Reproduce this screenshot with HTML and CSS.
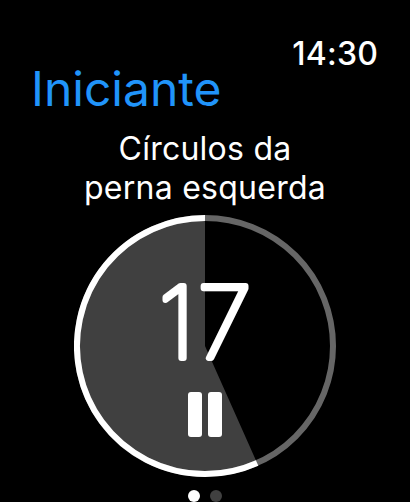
FILE: index.html
```
<!DOCTYPE html>
<html lang="pt">
<head>
<meta charset="utf-8">
<title>Iniciante</title>
<link rel="stylesheet" href="styles.css">
</head>
<body>
<main class="watch">
  <header class="header">
    <time class="clock">14:30</time>
    <h1 class="title">Iniciante</h1>
  </header>
  <p class="exercise">Círculos da<br>perna esquerda</p>
  <svg class="timer" viewBox="0 0 262 262">
    <path class="wedge" d="M131 131V3A128 128 0 1 0 183.1 247.9Z"/>
    <circle class="track" cx="131" cy="131" r="128"/>
    <path class="progress" d="M131 3A128 128 0 1 0 183.1 247.9"/>
    <text class="seconds" x="84.5" y="143">1</text>
    <text class="seconds" x="123.5" y="143">7</text>
    <rect class="bar" x="114" y="177" width="14" height="45" rx="3"/>
    <rect class="bar" x="134" y="177" width="14" height="45" rx="3"/>
  </svg>
  <nav class="pages"><span class="dot current"></span><span class="dot"></span></nav>
</main>
</body>
</html>
```
FILE: styles.css
```
body {
  margin: 0;
  background: #000;
  color: #fff;
  font-family: Inter, "Liberation Sans", sans-serif;
}
.watch {
  display: flex;
  flex-direction: column;
  align-items: center;
  width: 410px;
  height: 502px;
  overflow: hidden;
}
.header {
  display: flex;
  flex-direction: column;
  align-self: stretch;
  height: 129px;
  padding: 34px 32px 0 31px;
  box-sizing: border-box;
}
.clock {
  align-self: flex-end;
  font-size: 32px;
  font-weight: 550;
  line-height: 40px;
  letter-spacing: 0.2px;
}
.title {
  margin: -14px 0 0;
  color: #2094fa;
  font-size: 48px;
  font-weight: 400;
  line-height: 58px;
}
.exercise {
  flex: none;
  height: 86px;
  margin: 0;
  text-align: center;
  font-size: 32px;
  line-height: 39px;
  letter-spacing: 0.25px;
  white-space: nowrap;
}
.timer {
  flex: none;
  width: 262px;
  height: 262px;
}
.wedge { fill: #404040; }
.track, .progress { fill: none; stroke-width: 6; }
.track { stroke: #666; }
.progress { stroke: #fff; }
.seconds {
  fill: #fff;
  stroke: #fff;
  stroke-width: 6;
  stroke-linejoin: round;
  font-size: 99px;
  font-weight: 100;
}
.bar { fill: #fff; }
.pages {
  display: flex;
  gap: 10px;
  margin-top: 13px;
}
.dot {
  width: 12px;
  height: 12px;
  border-radius: 50%;
  background: #404040;
}
.current { background: #fff; }
```
